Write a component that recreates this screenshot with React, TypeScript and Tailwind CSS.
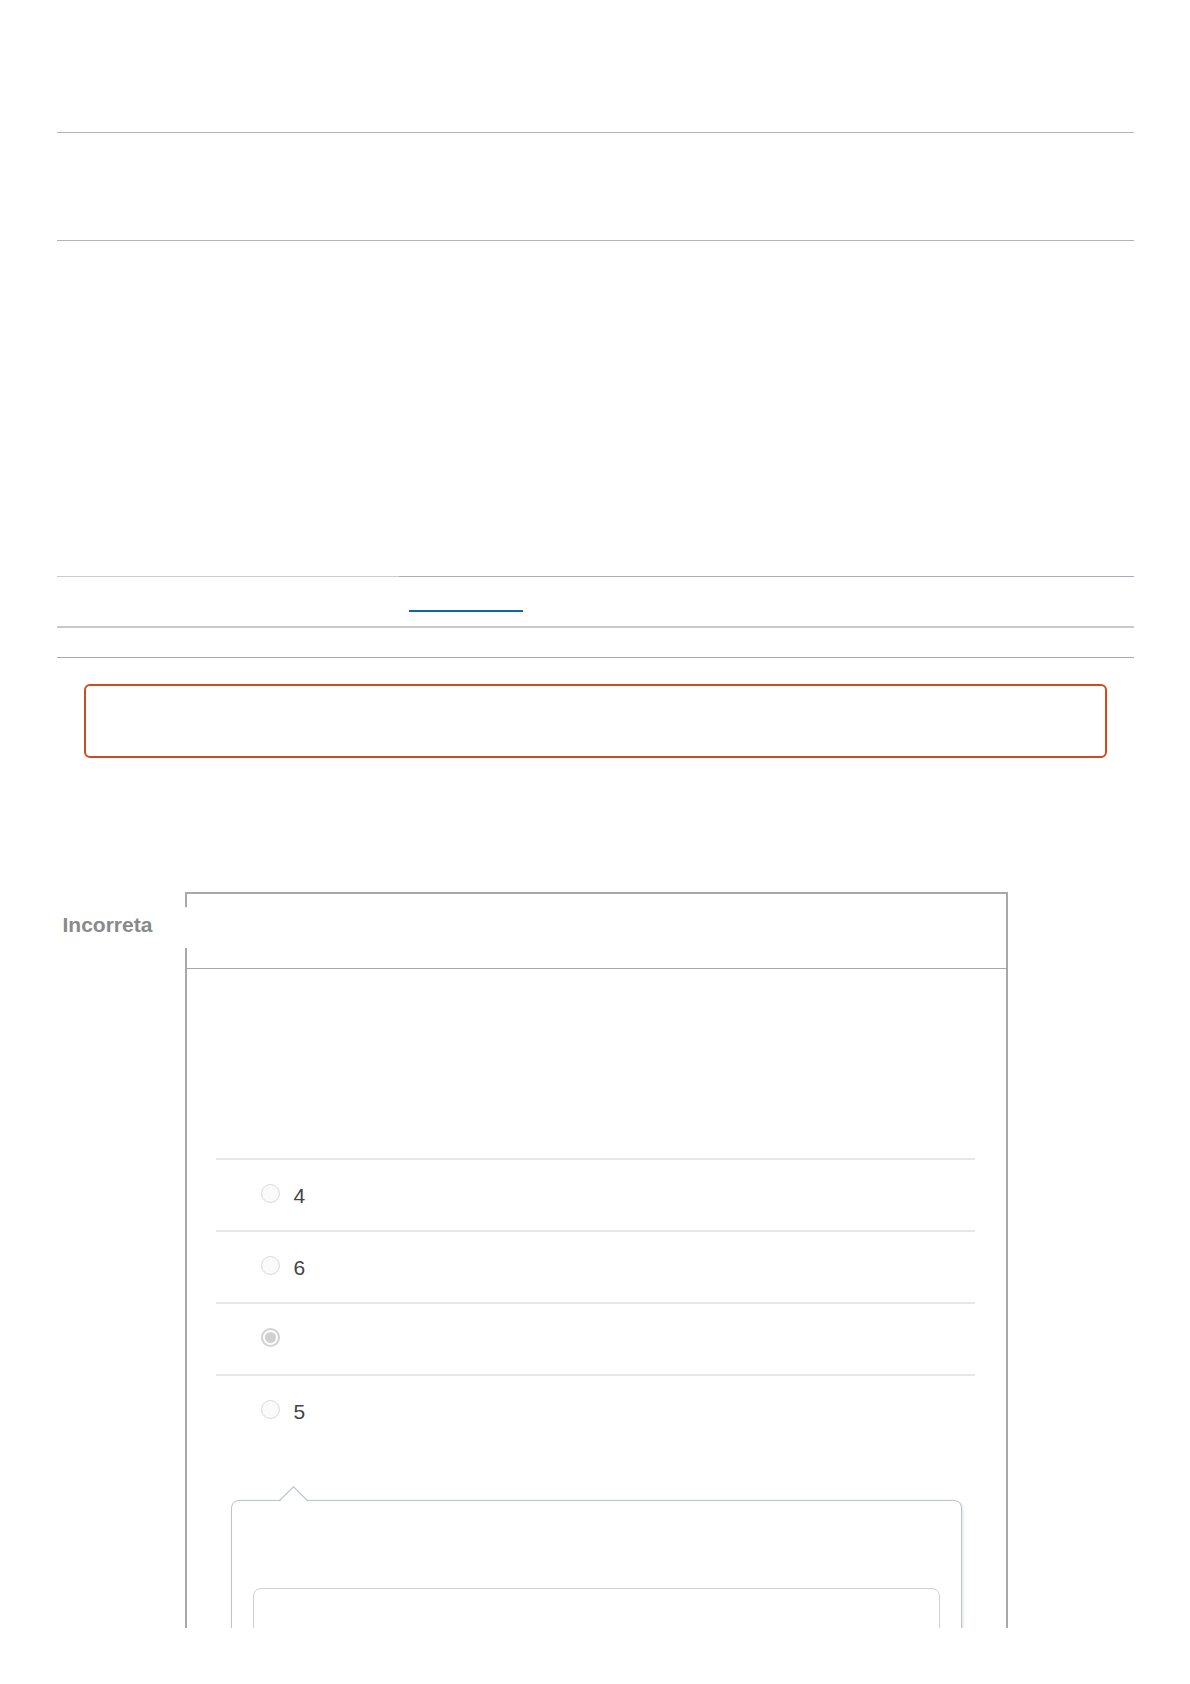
const options = [
  { label: "4", checked: false },
  { label: "6", checked: false },
  { label: "", checked: true },
  { label: "5", checked: false },
];

function Radio({ checked }: { checked: boolean }) {
  if (checked) {
    return (
      <span className="flex h-[19px] w-[19px] shrink-0 items-center justify-center rounded-full border-2 border-[#d2d2d2] bg-white">
        <span className="h-[11px] w-[11px] rounded-full bg-[#d0d0d0]" />
      </span>
    );
  }
  return <span className="h-[19px] w-[19px] shrink-0 rounded-full border border-[#dadada] bg-[#fafafa]" />;
}

export default function App() {
  return (
    <div className="h-[1628px] overflow-hidden bg-white font-['Liberation_Sans',Arial,sans-serif]">
      <div className="mx-auto w-[1077px]">
        <div className="h-[132px]" />
        <div className="h-px bg-[#b4b4b4]" />
        <div className="h-[107px]" />
        <div className="h-px bg-[#b4b4b4]" />
        <div className="h-[335px]" />

        {/* tabs */}
        <div className="flex h-px">
          <div className="w-[342px] bg-[#c8ccd0]" />
          <div className="flex-1 bg-[#a7aeb5]" />
        </div>
        <div className="pl-[352px] pt-[33px] pb-[14px]">
          <div className="h-[2px] w-[114px] bg-[#0a6aa1]" />
        </div>
        <div className="h-[2px] bg-[#c6cacd]" />
        <div className="h-[29px]" />
        <div className="h-px bg-[#a7aaad]" />
        <div className="h-[26px]" />

        {/* alert */}
        <div className="mx-[27px] h-[74px] rounded-md border-2 border-[#cf4a1c]" />

        <div className="h-[134px]" />

        {/* question */}
        <div className="flex">
          <div className="w-[128px] shrink-0">
            <div className="ml-[6px] mt-[15px] text-[21px] font-bold leading-[36px] text-[#8a8a8a]">Incorreta</div>
          </div>
          <div className="relative w-[823px] border-2 border-b-0 border-[#a8a8a8]">
            <div className="absolute -left-[2px] top-[13px] h-[41px] w-[2px] bg-white" />
            <div className="h-[75px] border-b border-[#a8a8a8]" />
            <div className="pl-[29px] pr-[31px] pt-[189px]">
              {options.map((o, i) => (
                <div key={i} className="flex h-[72px] items-start border-t-2 border-[#e8e8e8] pl-[45px] pt-[24px]">
                  <Radio checked={o.checked} />
                  <span className="ml-[14px] mt-[1px] text-[21px] leading-[22px] text-[#444444]">{o.label}</span>
                </div>
              ))}
            </div>

            {/* feedback */}
            <div className="relative mx-[44px] mt-[54px] h-[200px] rounded-lg border border-[#bcc4cc] bg-white shadow-[1px_1px_3px_rgba(0,0,0,0.12)]">
              <svg className="absolute left-[47px] -top-[15px]" width="29" height="16" viewBox="0 0 29 16">
                <polygon points="0,16 14.5,1 29,16" fill="white" />
                <polyline points="0,15 14.5,0.8 29,15" fill="none" stroke="#bcc4cc" strokeWidth="1.2" />
              </svg>
              <div className="px-[21px] pt-[87px]">
                <div className="h-[120px] rounded-lg border border-[#ccd2d8]" />
              </div>
            </div>
          </div>
        </div>
      </div>
    </div>
  );
}
